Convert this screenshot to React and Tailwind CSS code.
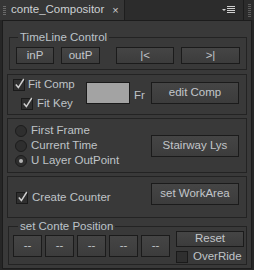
import React from "react";

const font = "font-['Liberation_Sans',Arial,sans-serif]";

function Btn({ children, className = "" }) {
  return (
    <div
      className={`flex items-center justify-center border border-[#1b1b1b] bg-gradient-to-b from-[#454545] to-[#3c3c3c] text-[#c2c6ca] text-[11.5px] leading-none ${className}`}
    >
      {children}
    </div>
  );
}

function Check({ checked = true }) {
  return (
    <span className="relative w-[12px] h-[12px] shrink-0 bg-[#2f2f2f] border border-[#1a1a1a]">
      {checked && (
        <svg
          className="absolute left-[0px] top-[-2px] overflow-visible"
          width="12"
          height="12"
          viewBox="0 0 12 12"
        >
          <path d="M1.8 6.5 L4.4 9.6 L9.8 1" stroke="#cfcfcf" strokeWidth="1.5" fill="none" />
        </svg>
      )}
    </span>
  );
}

function Radio({ on = false }) {
  return (
    <span className="w-[12px] h-[12px] shrink-0 rounded-full bg-[#2e2e2e] border border-[#1c1c1c] flex items-center justify-center">
      {on && <span className="w-[4px] h-[4px] rounded-full bg-[#b5b5b5]" />}
    </span>
  );
}

function Grip({ className = "" }) {
  return (
    <div className={`flex flex-col gap-[1px] ${className}`}>
      {Array.from({ length: 5 }).map((_, i) => (
        <span key={i} className="w-[3px] h-[1px] bg-[#6a6a6a]" />
      ))}
    </div>
  );
}

export default function App() {
  return (
    <div className={`w-[254px] h-[270px] bg-[#262626] flex flex-col ${font} text-[11.5px] text-[#bfc3c7]`}>
      {/* tab bar */}
      <div className="h-[20px] flex shrink-0">
        <div className="w-[125px] bg-[#363636] flex items-center border-r border-[#1e1e1e]">
          <Grip className="ml-[3px]" />
          <span className="ml-[5px] text-[#cdd0d3] leading-none">conte_Compositor</span>
          <span className="ml-[8px] text-[#cccccc] text-[11px] leading-none">×</span>
        </div>
        <div className="flex-1 flex items-center justify-end pr-[7px] bg-[#2c2c2c]">
          <svg width="14" height="8" viewBox="0 0 14 8">
            <path d="M0 3 L4 3 L2 5 Z" fill="#d0d0d0" />
            <rect x="5" y="0" width="8" height="1" fill="#d0d0d0" />
            <rect x="5" y="2" width="8" height="1" fill="#d0d0d0" />
            <rect x="5" y="4" width="8" height="1" fill="#d0d0d0" />
            <rect x="5" y="6" width="8" height="1" fill="#d0d0d0" />
          </svg>
        </div>
        <div className="w-[11px] border-l border-[#1c1c1c] bg-[#2c2c2c] flex items-center justify-center">
          <div className="flex flex-col gap-[1px]">
            {Array.from({ length: 7 }).map((_, i) => (
              <span key={i} className="w-[3px] h-[1px] bg-[#5c5c5c]" />
            ))}
          </div>
        </div>
      </div>

      {/* panel */}
      <div className="mx-[2px] h-[249px] border border-[#1c1c1c] bg-[#393939] px-[4px] flex flex-col">
        {/* TimeLine Control */}
        <fieldset className="mt-[9px] ml-[2px] border border-[#232323]">
          <legend className="ml-[8px] px-[2px] leading-[14px] text-[#bcc3ca]">TimeLine Control</legend>
          <div className="flex pl-[6px] pr-[6px] pt-[3px] pb-[5px]">
            <Btn className="w-[38px] h-[17px]">inP</Btn>
            <Btn className="ml-[7px] w-[39px] h-[17px]">outP</Btn>
            <Btn className="ml-[16px] w-[58px] h-[17px]">|&lt;</Btn>
            <Btn className="ml-[7px] w-[59px] h-[17px]">&gt;|</Btn>
          </div>
        </fieldset>

        {/* Fit comp */}
        <div className="mt-[4px] h-[41px] border border-[#232323] flex items-start">
          <div className="ml-[5px] flex flex-col w-[73px]">
            <label className="mt-[4px] flex items-center h-[12px]">
              <Check />
              <span className="ml-[3px]">Fit Comp</span>
            </label>
            <label className="mt-[7px] ml-[8px] flex items-center h-[12px]">
              <Check />
              <span className="ml-[4px]">Fit Key</span>
            </label>
          </div>
          <div className="mt-[7px] w-[44px] h-[22px] bg-[#a3a3a3] border border-[#1a1a1a]" />
          <span className="mt-[13px] ml-[4px] leading-[14px]">Fr</span>
          <Btn className="mt-[7px] ml-auto mr-[7px] w-[88px] h-[22px]">edit Comp</Btn>
        </div>

        {/* radios */}
        <div className="mt-[3px] h-[55px] border border-[#232323] flex items-center">
          <div className="ml-[7px] flex flex-col gap-[3px]">
            <label className="flex items-center h-[12px]">
              <Radio />
              <span className="ml-[4px]">First Frame</span>
            </label>
            <label className="flex items-center h-[12px]">
              <Radio />
              <span className="ml-[4px]">Current Time</span>
            </label>
            <label className="flex items-center h-[12px]">
              <Radio on />
              <span className="ml-[4px]">U Layer OutPoint</span>
            </label>
          </div>
          <Btn className="ml-auto mr-[7px] w-[88px] h-[22px]">Stairway Lys</Btn>
        </div>

        {/* counter */}
        <div className="mt-[3px] h-[42px] border border-[#232323] flex items-start">
          <label className="mt-[15px] ml-[8px] flex items-center h-[12px]">
            <Check />
            <span className="ml-[4px]">Create Counter</span>
          </label>
          <Btn className="mt-[6px] ml-auto mr-[7px] w-[88px] h-[22px]">set WorkArea</Btn>
        </div>

        {/* set Conte Position */}
        <fieldset className="mt-[3px] ml-[1px] border border-[#232323]">
          <legend className="ml-[9px] px-[2px] leading-[10px] text-[#bcc3ca]">set Conte Position</legend>
          <div className="flex items-start pl-[4px] pr-[2px] pb-[1px]">
            <div className="mt-[4px] flex gap-[3px]">
              {Array.from({ length: 5 }).map((_, i) => (
                <Btn key={i} className="w-[29px] h-[22px]">--</Btn>
              ))}
            </div>
            <div className="ml-auto flex flex-col">
              <Btn className="w-[68px] h-[16px]">Reset</Btn>
              <label className="mt-[3px] flex items-center h-[13px]">
                <Check checked={false} />
                <span className="ml-[5px]">OverRide</span>
              </label>
            </div>
          </div>
        </fieldset>
      </div>
    </div>
  );
}
